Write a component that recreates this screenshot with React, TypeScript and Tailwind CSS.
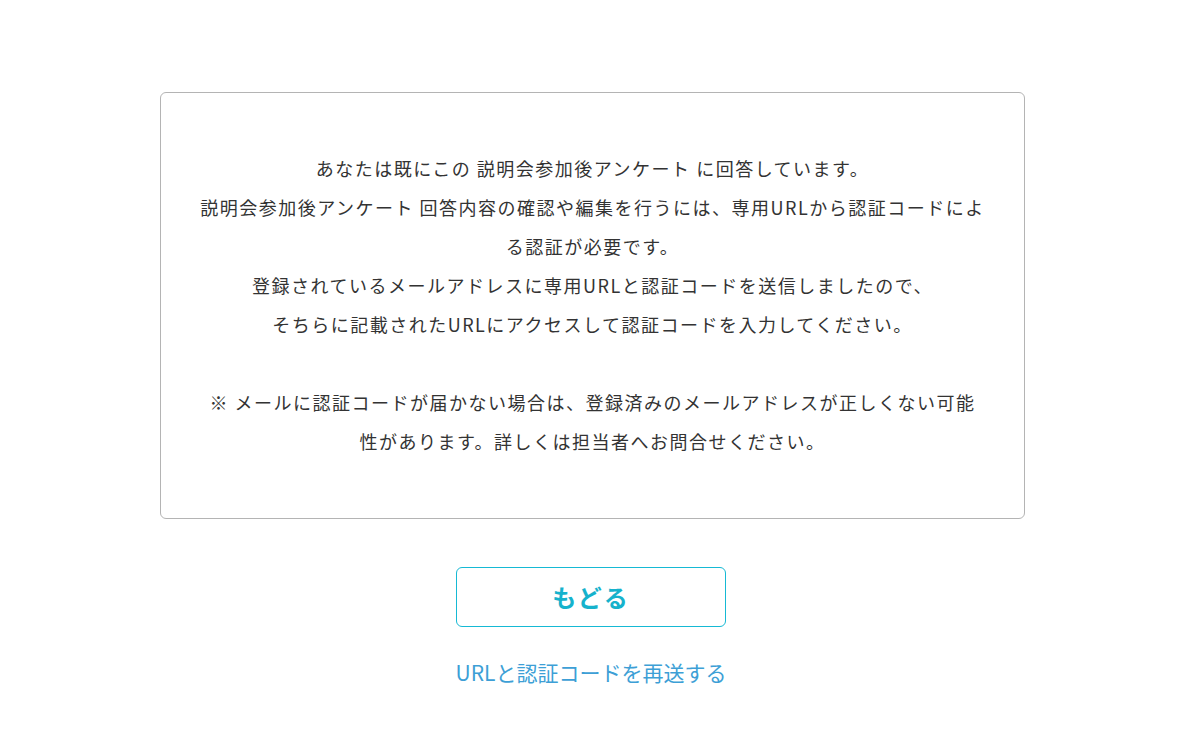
export default function App() {
  return (
    <div
      className="min-h-[746px] bg-white flex flex-col items-center pt-[92px]"
      style={{ fontFamily: '"Noto Sans CJK JP", "Noto Sans", sans-serif' }}
    >
      <div className="w-[865px] ml-[3px] border border-[#b4b4b4] rounded-[6px] px-[30px] pt-[56px] pb-[57px] text-center text-[18px] leading-[39px] tracking-[1.5px] text-[#333333]">
        <p>あなたは既にこの 説明会参加後アンケート に回答しています。</p>
        <p>
          説明会参加後アンケート 回答内容の確認や編集を行うには、専用URLから認証コードによ
          <br />
          る認証が必要です。
        </p>
        <p>登録されているメールアドレスに専用URLと認証コードを送信しましたので、</p>
        <p>そちらに記載されたURLにアクセスして認証コードを入力してください。</p>
        <p>&nbsp;</p>
        <p>
          ※ メールに認証コードが届かない場合は、登録済みのメールアドレスが正しくない可能
          <br />
          性があります。詳しくは担当者へお問合せください。
        </p>
      </div>
      <button className="mt-[48px] w-[270px] h-[60px] border border-[#16b9d4] rounded-[6px] bg-white text-[#16b2cc] text-[24px] font-bold tracking-[0.08em]">
        もどる
      </button>
      <a className="mt-[31px] text-[21px] text-[#3d9fd6] leading-[28px] cursor-pointer">
        URLと認証コードを再送する
      </a>
    </div>
  );
}
